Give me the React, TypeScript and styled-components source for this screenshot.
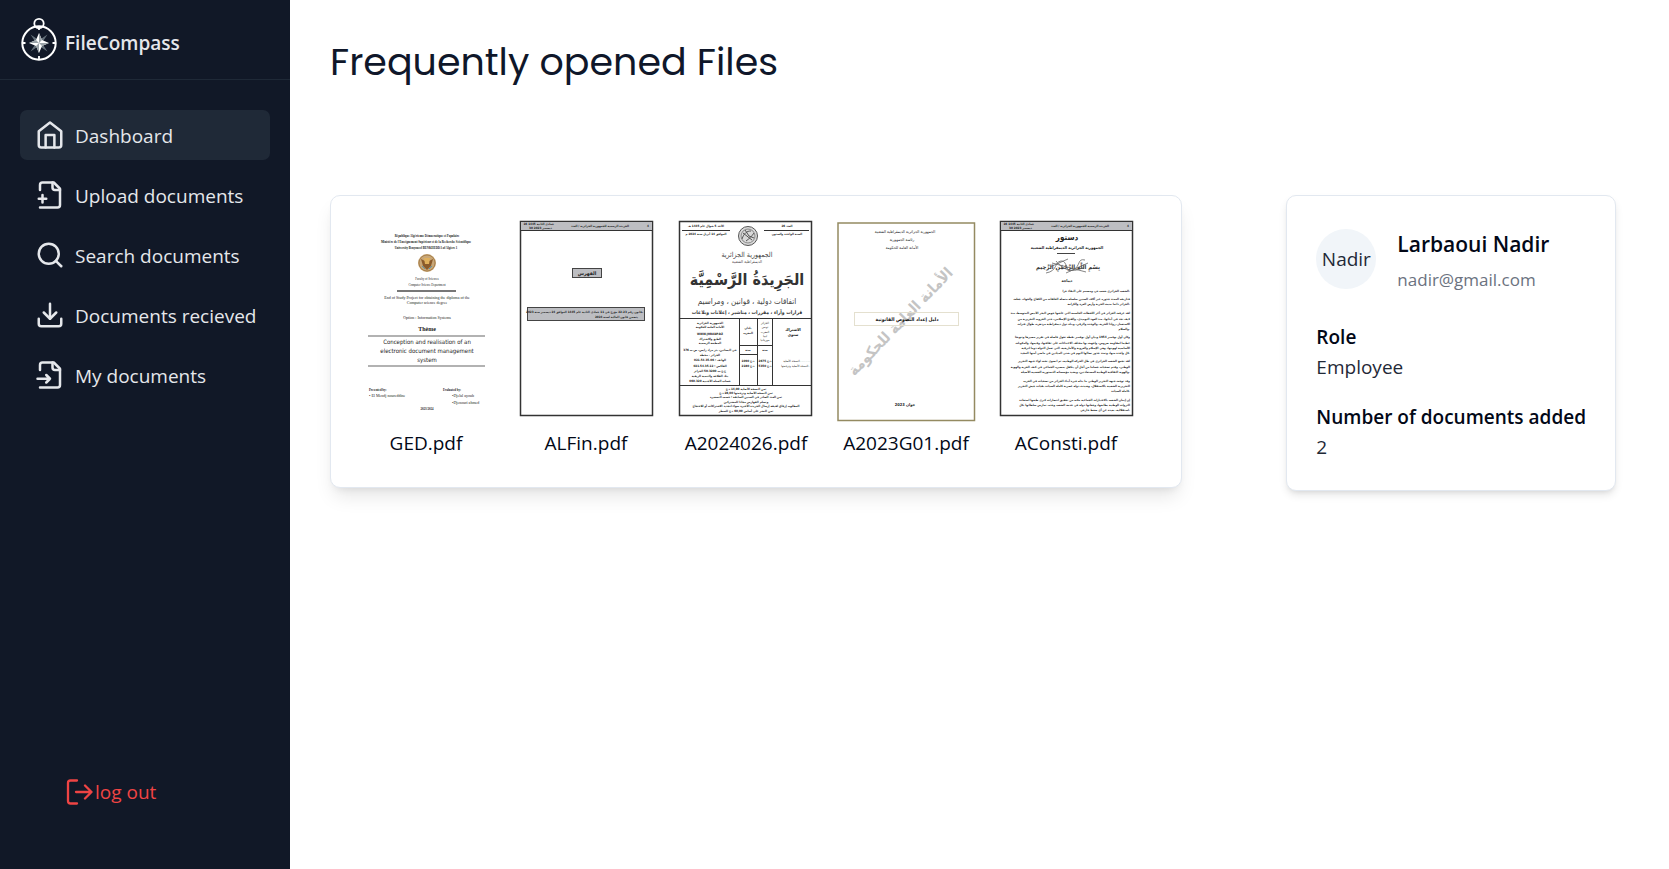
import React from "react";
import styled, { createGlobalStyle, css } from "styled-components";
import { Search, Download } from "lucide-react";

const GlobalStyle = createGlobalStyle`
  *, *::before, *::after { box-sizing: border-box; }
  body {
    margin: 0;
    background: #fff;
    color: #020817;
    font-family: "Open Sans", "Noto Sans", sans-serif;
    font-size: 19px;
    line-height: 30px;
  }
  h1, h2, p, dl, dd, ul, figure { margin: 0; padding: 0; }
`;

const Page = styled.div`
  display: flex;
  min-height: 100vh;
`;

const Sidebar = styled.aside`
  flex: 0 0 290px;
  min-width: 0;
  display: flex;
  flex-direction: column;
  background: #111827;
  color: #e5e7eb;
`;

const Brand = styled.a`
  display: flex;
  align-items: flex-end;
  gap: 7px;
  height: 80px;
  padding: 0 20px 18px;
  border-bottom: 1px solid #1f2937;
  color: #e5e7eb;
  font-size: 19px;
  font-weight: 600;
  line-height: 36px;
  text-decoration: none;
`;

const Nav = styled.nav`
  display: flex;
  flex-direction: column;
  gap: 10px;
  padding: 30px 20px;
`;

const NavLink = styled.a<{ $active?: boolean }>`
  display: flex;
  align-items: center;
  gap: 10px;
  height: 50px;
  padding: 0 15px;
  border-radius: 7px;
  color: #e5e7eb;
  white-space: nowrap;
  text-decoration: none;
  ${(p) => p.$active && css`background: #1f2937;`}
  svg { flex: none; }
  span { padding-top: 2px; }
`;

const LogoutButton = styled.button`
  display: flex;
  align-items: center;
  gap: 2px;
  margin: auto auto 62px 66px;
  padding: 0;
  border: 0;
  background: none;
  color: #ef4444;
  font: inherit;
  cursor: pointer;
`;

const Main = styled.main`
  flex: 1;
  min-width: 0;
  padding: 32px 53px 40px 40px;
`;

const Title = styled.h1`
  font-family: Poppins, Inter, sans-serif;
  font-size: 38px;
  font-weight: 400;
  line-height: 60px;
  color: #0f172a;
`;

const Columns = styled.div`
  display: flex;
  justify-content: space-between;
  align-items: flex-start;
  gap: 40px;
  margin-top: 103px;
`;

const Card = styled.section`
  border: 1px solid #e2e8f0;
  border-radius: 10px;
  background: #fff;
`;

const FilesCard = styled(Card)`
  padding: 20px 35px 29px 15px;
  box-shadow: 0 12px 19px -4px rgba(0, 0, 0, 0.1), 0 5px 8px -5px rgba(0, 0, 0, 0.1);
`;

const FileList = styled.ul`
  display: grid;
  grid-template-columns: repeat(5, 160px);
  list-style: none;
`;

const FileItem = styled.figure`
  display: flex;
  flex-direction: column;
  align-items: center;
`;

const Thumb = styled.svg`
  display: block;
  width: 160px;
  height: 212px;
`;

const ProfileCard = styled(Card)`
  flex: none;
  padding: 33px 29px 28px;
  box-shadow: 0 5px 8px -1px rgba(0, 0, 0, 0.1), 0 3px 5px -3px rgba(0, 0, 0, 0.1);
`;

const ProfileHead = styled.div`
  display: flex;
  align-items: flex-start;
  gap: 21px;
`;

const Avatar = styled.div`
  display: grid;
  place-items: center;
  width: 60px;
  height: 60px;
  border-radius: 50%;
  background: #f1f5f9;
  color: #1f2937;
`;

const Name = styled.h2`
  font-size: 21px;
  font-weight: 600;
  line-height: 30px;
`;

const Email = styled.p`
  margin-top: 4px;
  font-size: 17px;
  line-height: 34px;
  color: #6b7280;
`;

const Facts = styled.dl`
  display: grid;
  gap: 20px;
  margin-top: 25px;
  dt { font-weight: 600; }
  dd { color: #1f2937; }
`;

/* ---------- icons ---------- */

const stroke = {
  fill: "none",
  stroke: "currentColor",
  strokeWidth: 2,
  strokeLinecap: "round" as const,
  strokeLinejoin: "round" as const,
  viewBox: "0 0 24 24",
  width: 30,
  height: 30,
  "aria-hidden": true,
};

const HomeIcon = () => (
  <svg {...stroke}>
    <path d="m3 9 9-7 9 7v11a2 2 0 0 1-2 2H5a2 2 0 0 1-2-2z" />
    <path d="M8.500 22V12h7v10" />
  </svg>
);

const FilePlusIcon = () => (
  <svg {...stroke}>
    <path d="M4 22h14a2 2 0 0 0 2-2V7l-5-5H6a2 2 0 0 0-2 2v4" />
    <path d="M14 2v4a2 2 0 0 0 2 2h4" />
    <path d="M3 15h6M6 12v6" />
  </svg>
);

const FileInputIcon = () => (
  <svg {...stroke}>
    <path d="M4 22h14a2 2 0 0 0 2-2V7l-5-5H6a2 2 0 0 0-2 2v4" />
    <path d="M14 2v4a2 2 0 0 0 2 2h4" />
    <path d="M2 15h10M9 18l3-3-3-3" />
  </svg>
);

const LogoutIcon = () => (
  <svg width="27" height="27" viewBox="0 0 27 27" fill="none" stroke="currentColor" strokeWidth="2.3" strokeLinecap="round" strokeLinejoin="round" aria-hidden>
    <path d="M11 1.500H4.500a2.500 2.500 0 0 0-2.500 2.500v18A2.500 2.500 0 0 0 4.500 24.500H11" />
    <path d="M10 13h15.500M19 6.500l6.500 6.500-6.500 6.500" />
  </svg>
);

const CompassLogo = () => (
  <svg width="38" height="44" viewBox="0 0 38 44" aria-hidden>
    <g fill="none" stroke="#fff">
      <circle cx="19" cy="26" r="16.700" strokeWidth="2" />
      <circle cx="19" cy="6.500" r="4.700" strokeWidth="1.800" />
      <path d="M19 10v3M19 39v3M2.500 26h3M32.500 26h3" strokeWidth="1.800" />
    </g>
    <path d="M10.500 17.500l6 4 2.500 4.500-4.500-2.500zM27.500 17.500l-4 6-4.500 2.500 2.500-4.500zM10.500 34.500l4-6 4.500-2.500-2.500 4.500zM27.500 34.500l-6-4-2.500-4.500 4.500 2.500z" fill="#64707a" />
    <path d="M19 16l3 7 7 3-7 3-3 7-3-7-7-3 7-3z" fill="#fff" />
    <path d="M19 16l3 7-3 3zM29 26l-7 3-3-3zM19 36l-3-7 3-3zM9 26l7-3 3 3z" fill="#9aa3a8" />
  </svg>
);

/* ---------- document thumbnails ---------- */

type LineProps = {
  x?: number;
  y: number;
  size?: number;
  anchor?: "start" | "middle" | "end";
  bold?: boolean;
  serif?: boolean;
  fill?: string;
  children: React.ReactNode;
};

const Line = ({ x = 80, y, size = 3, anchor = "middle", bold, serif, fill = "#222", children }: LineProps) => (
  <text
    x={x}
    y={y}
    fontSize={size}
    textAnchor={anchor}
    fontWeight={bold ? 700 : 400}
    fontFamily={serif ? '"Liberation Serif", "DejaVu Sans", serif' : '"DejaVu Sans Condensed", "DejaVu Sans", sans-serif'}
    fill={fill}
  >
    {children}
  </text>
);

const GedThumb = () => (
  <Thumb viewBox="0 0 160 212" role="img" aria-label="GED.pdf preview">
    <Line x={81} y={21} bold serif>République Algérienne Démocratique et Populaire</Line>
    <Line y={27} bold serif>Ministère de l'Enseignement Supérieur et de la Recherche Scientifique</Line>
    <Line y={33} bold serif>University Benyoucef BENKHEDDA of Algiers 1</Line>
    <circle cx="81" cy="47" r="9" fill="#c9a777" />
    <circle cx="81" cy="47" r="8" fill="none" stroke="#a8814e" />
    <path d="M75 43l6 3 6-3-2 7-4 4-4-4z" fill="#8a5a2b" />
    <path d="M78 42h6l-1 6h-4z" fill="#e0b05c" />
    <path d="M76 50l3 3M86 50l-3 3" stroke="#5b97ad" />
    <Line x={81} y={64} serif>Faculty of Sciences</Line>
    <Line x={81} y={70} serif>Computer Science Department</Line>
    <path d="M51 75h59" stroke="#777" strokeWidth="2" />
    <Line x={81} y={83} size={4} serif>End of Study Project for obtaining the diploma of the</Line>
    <Line x={81} y={88} size={4} serif>Computer science degree</Line>
    <Line x={81} y={103} size={4} serif>Option : Information Systems</Line>
    <Line x={81} y={115} size={6} bold serif>Thème</Line>
    <path d="M22 120h117M22 150h117" stroke="#999" strokeWidth="1.500" />
    <Line x={81} y={128} size={6}>Conception and realisation of an</Line>
    <Line x={81} y={137} size={6}>electronic document management</Line>
    <Line x={81} y={146} size={6}>system</Line>
    <Line x={23} y={175} anchor="start" bold serif>Presented by:</Line>
    <Line x={23} y={181} anchor="start" size={4} serif>• El Mendj noureddine</Line>
    <Line x={97} y={175} anchor="start" bold serif>Evaluated by:</Line>
    <Line x={106} y={181} anchor="start" size={4} serif>•Djelal ayoub</Line>
    <Line x={106} y={188} anchor="start" size={4} serif>•Djenouri ahmed</Line>
    <Line x={81} y={194} bold serif>2023/2024</Line>
  </Thumb>
);

const GazetteHeader = () => (
  <>
    <rect x="14.500" y="5.500" width="132" height="194" fill="#fff" stroke="#333" strokeWidth="1.500" />
    <rect x="15" y="6" width="131" height="8" fill="#bdbec2" />
    <path d="M14 14.500h133" stroke="#333" />
    <Line x={48} y={9} anchor="end" bold>16 جمادى الثانية 1445</Line>
    <Line x={46} y={13} anchor="end" bold>30 ديسمبر 2023</Line>
    <Line x={94} y={11} bold>الجريدة الرسمية للجمهورية الجزائرية / العدد</Line>
    <Line x={142} y={11} bold>4</Line>
  </>
);

const FinanceThumb = () => (
  <Thumb viewBox="0 0 160 212" role="img" aria-label="ALFin.pdf preview">
    <GazetteHeader />
    <rect x="66.500" y="52.500" width="29" height="9" fill="#bdbec2" stroke="#444" />
    <Line x={81} y={59} size={5} bold>الفهرس</Line>
    <rect x="21.500" y="91.500" width="117" height="13" fill="#bdbec2" stroke="#444" />
    <Line x={137} y={97} anchor="end" bold>قانون رقم 23-22 مؤرخ في 11 جمادى الثانية عام 1445 الموافق 24 ديسمبر سنة 2023،</Line>
    <Line x={132} y={102} anchor="end" bold>يتضمن قانون المالية لسنة 2024</Line>
  </Thumb>
);

const leftRows: [number, string][] = [
  [108, "الجمهورية الجزائرية"],
  [112, "الأمانة العامة للحكومة"],
  [119, "WWW.JORADP.DZ"],
  [124, "الطبع والاشتراك"],
  [128, "المطبعة الرسمية"],
  [135, "حي البساتين، بئر مراد رايس، ص.ب 376"],
  [140, "الجزائر - محطة"],
  [145, "الهاتف : 021.54.35.06"],
  [151, "الفاكس : 021.54.35.12"],
  [156, "ح.ج.ب 3200-50 الجزائر"],
  [161, "بنك الفلاحة والتنمية الريفية"],
  [166, "حساب العملة الأجنبية 060.320"],
];

const footerRows: [number, string][] = [
  [174, "ثمن النسخة الأصلية 14,00 د.ج"],
  [178, "ثمن النسخة الأصلية وترجمتها 28,00 د.ج"],
  [182, "ثمن العدد الصادر في السنين السابقة : حسب التسعيرة"],
  [187, "وتسلم الفهارس مجانا للمشتركين"],
  [191, "المطلوب إرفاق لفيفة إرسال الجريدة الأخيرة سواء لتجديد الاشتراكات أو للاحتجاج"],
  [196, "ثمن النشر على أساس 60,00 د.ج للسطر"],
];

const GazetteThumb = () => (
  <Thumb viewBox="0 0 160 212" role="img" aria-label="A2024026.pdf preview">
    <g fill="none" stroke="#333">
      <rect x="13.500" y="5.500" width="132" height="194" strokeWidth="1.500" />
      <path d="M14 102.500h132M14 169.500h132M73.500 103v66M91.500 103v66M106.500 103v66M74 129.500h32M74 138.500h17" />
      <path d="M16 14.500h48M98 14.500h45" />
    </g>
    <Line x={40} y={11} bold>الأحد 5 شوال عام 1445 هـ</Line>
    <Line x={40} y={19} bold>الموافق 14 أبريل سنة 2024 م</Line>
    <Line x={121} y={11} bold>العدد 26</Line>
    <Line x={121} y={19} bold>السنة الواحدة والستون</Line>
    <circle cx="82" cy="20" r="9.500" fill="#d9d9d9" stroke="#555" />
    <circle cx="82" cy="20" r="7" fill="none" stroke="#888" />
    <path d="M76 23c2-6 5-8 9-8M77 17l9 7M80 25c3-2 6-5 8-8M79 14l4 6 5 2" fill="none" stroke="#555" />
    <Line x={81} y={41} size={7} fill="#444">الجمهورية الجزائرية</Line>
    <Line x={81} y={47} size={4} fill="#444">الديمقراطية الشعبية</Line>
    <Line x={81} y={69} size={16} bold fill="#333">الجَرِيدَةُ الرَّسْمِيَّة</Line>
    <Line x={81} y={88} size={8} fill="#444">اتفاقات دولية ، قوانين ، ومراسيم</Line>
    <Line x={81} y={98} size={5} bold fill="#333">قرارات وآراء ، مقررات ، مناشير ، إعلانات وبلاغات</Line>
    {leftRows.map(([y, t]) => (
      <Line key={y} x={44} y={y} bold>{t}</Line>
    ))}
    <Line x={82} y={113} bold>بلدان</Line>
    <Line x={82} y={118} bold>المغرب</Line>
    <Line x={82} y={135} bold>سنة</Line>
    <Line x={99} y={108}>الجزائر</Line>
    <Line x={99} y={112}>تونس</Line>
    <Line x={99} y={117}>المغرب</Line>
    <Line x={99} y={121}>ليبيا</Line>
    <Line x={99} y={125}>موريتانيا</Line>
    <Line x={99} y={135} bold>سنة</Line>
    <Line x={82} y={146} bold>1090 د.ج</Line>
    <Line x={82} y={151} bold>2180 د.ج</Line>
    <Line x={99} y={146} bold>2675 د.ج</Line>
    <Line x={99} y={151} bold>5350 د.ج</Line>
    <Line x={127} y={115} size={4} bold>الاشتراك</Line>
    <Line x={127} y={120} size={4} bold>سنوي</Line>
    <Line x={144} y={146} anchor="end">النسخة الأصلية............</Line>
    <Line x={144} y={151} anchor="end">النسخة الأصلية وترجمتها..</Line>
    {footerRows.map(([y, t]) => (
      <Line key={y} y={y} bold>{t}</Line>
    ))}
  </Thumb>
);

const GuideThumb = () => (
  <Thumb viewBox="0 0 160 212" role="img" aria-label="A2023G01.pdf preview">
    <rect x="12" y="7" width="136.500" height="197.500" fill="#fff" stroke="#948a61" strokeWidth="1.500" />
    <g transform="rotate(-46 76 107)">
      <Line x={76} y={110} size={15} bold fill="#c4c4c4">الأمانة العامة للحكومة</Line>
    </g>
    <Line x={79} y={17} size={4}>الجمهورية الجزائرية الديمقراطية الشعبية</Line>
    <Line x={76} y={25} size={4}>رئاسة الجمهورية</Line>
    <Line x={76} y={33} size={4}>الأمانة العامة للحكومة</Line>
    <rect x="28.500" y="96.500" width="104" height="13" fill="none" stroke="#e4e0cf" />
    <Line x={81} y={105} size={5} bold fill="#111">دليل إعداد النصوص القانونية</Line>
    <Line x={79} y={190} size={4} bold>جوان 2023</Line>
  </Thumb>
);

const preamble: [number, string][] = [
  [76, "الشعب الجزائري شعب حر، ومصمم على البقاء حرا."],
  [84, "فتاريخه الممتد جذوره عبر آلاف السنين سلسلة متصلة الحلقات من الكفاح والجهاد، جعلت"],
  [89, "الجزائر دائما منبت الحرية وأرض العزة والكرامة."],
  [98, "لقد عرفت الجزائر في أعز اللحظات الحاسمة التي عاشها حوض البحر الأبيض المتوسط، منذ"],
  [104, "كيف تجد في أبنائها، منذ العهد النوميدي، والفتح الإسلامي، حتى الحروب التحريرية من"],
  [109, "الاستعمار، روادا للحرية، والوحدة والرقي، وبناة دول ديمقراطية مزدهرة، طوال فترات"],
  [114, "والسلام."],
  [122, "وكان أول نوفمبر 1954 وبيان أول نوفمبر نقطة تحول فاصلة في تقرير مصيرها وتتويجا"],
  [128, "عظيما لمقاومة ضروس، واجهت بها مختلف الاعتداءات على ثقافتها، وقيمها، والمكونات"],
  [133, "الأساسية لهويتها، وهي الإسلام والعروبة والأمازيغية، التي تعمل الدولة دوما لترقية"],
  [138, "كل واحدة منها، وتمتد جذور نضالها اليوم في شتى الميادين في ماضي أمتها المجيد."],
  [146, "لقد تجمع الشعب الجزائري في ظل الحركة الوطنية، ثم انضوى تحت لواء جبهة التحرير"],
  [152, "الوطني، وقدم تضحيات جساما من أجل أن يتكفل بمصيره الجماعي في كنف الحرية والهوية"],
  [157, "والهوية الثقافية الوطنية المستعادتين، ويشيد مؤسساته الدستورية الشعبية الأصيلة."],
  [166, "وقد توجت جبهة التحرير الوطني ما بذله خيرة أبناء الجزائر من تضحيات في الحرب"],
  [171, "التحريرية الشعبية بالاستقلال، وشيدت دولة عصرية كاملة السيادة بقيادة جيش التحرير"],
  [176, "كاملة السيادة."],
  [185, "إن إيمان الشعب بالاختيارات الجماعية مكنه من تحقيق انتصارات كبرى طبعها استعادة"],
  [190, "الثروات الوطنية بطابعها، وجعلتها دولة في خدمة الشعب وحده، تمارس سلطاتها بكل"],
  [195, "استقلالية، بعيدة عن أي ضغط خارجي."],
];

const ConstitutionThumb = () => (
  <Thumb viewBox="0 0 160 212" role="img" aria-label="AConsti.pdf preview">
    <GazetteHeader />
    <Line x={81} y={24} size={8} bold>دستور</Line>
    <Line x={81} y={33} size={4} bold>الجمهورية الجزائرية الديمقراطية الشعبية</Line>
    <path d="M71 37.500h18" stroke="#444" />
    <Line x={82} y={53} size={6} bold fill="#333">بِسْمِ اللَّهِ الرَّحْمَٰنِ الرَّحِيم</Line>
    <path d="M60 57c12-2 8-11 15-12s4 13 12 9 4-12 12-10M66 47l34 9M64 51l18-8M80 57l22-10M70 45c8 10 18 12 28 6" fill="none" stroke="#666" strokeWidth="0.800" />
    <Line x={81} y={66} size={4} bold>ديباجة</Line>
    {preamble.map(([y, t]) => (
      <Line key={y} x={144} y={y} anchor="end" bold>{t}</Line>
    ))}
  </Thumb>
);

/* ---------- data ---------- */

const links = [
  { label: "Dashboard", icon: <HomeIcon />, active: true },
  { label: "Upload documents", icon: <FilePlusIcon /> },
  { label: "Search documents", icon: <Search size={30} aria-hidden /> },
  { label: "Documents recieved", icon: <Download size={30} aria-hidden /> },
  { label: "My documents", icon: <FileInputIcon /> },
];

const files = [
  { name: "GED.pdf", thumb: <GedThumb /> },
  { name: "ALFin.pdf", thumb: <FinanceThumb /> },
  { name: "A2024026.pdf", thumb: <GazetteThumb /> },
  { name: "A2023G01.pdf", thumb: <GuideThumb /> },
  { name: "AConsti.pdf", thumb: <ConstitutionThumb /> },
];

export default function App() {
  return (
    <Page>
      <GlobalStyle />
      <Sidebar>
        <Brand href="#">
          <CompassLogo />
          <span>FileCompass</span>
        </Brand>
        <Nav>
          {links.map((l) => (
            <NavLink key={l.label} href="#" $active={l.active} aria-current={l.active ? "page" : undefined}>
              {l.icon}
              <span>{l.label}</span>
            </NavLink>
          ))}
        </Nav>
        <LogoutButton type="button">
          <LogoutIcon />
          log out
        </LogoutButton>
      </Sidebar>
      <Main>
        <Title>Frequently opened Files</Title>
        <Columns>
          <FilesCard>
            <FileList>
              {files.map((f) => (
                <li key={f.name}>
                  <FileItem>
                    {f.thumb}
                    <figcaption>{f.name}</figcaption>
                  </FileItem>
                </li>
              ))}
            </FileList>
          </FilesCard>
          <ProfileCard>
            <ProfileHead>
              <Avatar>Nadir</Avatar>
              <div>
                <Name>Larbaoui Nadir</Name>
                <Email>nadir@gmail.com</Email>
              </div>
            </ProfileHead>
            <Facts>
              <div>
                <dt>Role</dt>
                <dd>Employee</dd>
              </div>
              <div>
                <dt>Number of documents added</dt>
                <dd>2</dd>
              </div>
            </Facts>
          </ProfileCard>
        </Columns>
      </Main>
    </Page>
  );
}
